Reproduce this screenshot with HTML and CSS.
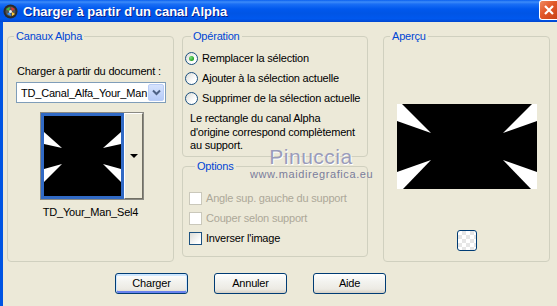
FILE: index.html
```html
<!DOCTYPE html>
<html lang="fr">
<head>
  <meta charset="UTF-8">
  <title>Charger à partir d'un canal Alpha</title>
  <link rel="stylesheet" href="styles.css">
</head>
<body>
  <div class="window">
    <div class="titlebar">
      <svg class="app-icon" width="15" height="15" viewBox="0 0 15 15">
        <circle cx="7.5" cy="7.5" r="7" fill="#2b2b2b"/>
        <circle cx="7.5" cy="7.5" r="5" fill="#555"/>
        <path d="M3 5 L7 3 L6 7 Z" fill="#3fbf3f"/>
        <path d="M8 3 L12 5 L9 7 Z" fill="#d33"/>
        <path d="M4 10 L7 8 L8 12 Z" fill="#39f"/>
        <path d="M9 8 L12 10 L9 12 Z" fill="#fc3"/>
        <circle cx="7.5" cy="7.5" r="1.5" fill="#eee"/>
      </svg>
      <span class="title">Charger à partir d'un canal Alpha</span>
      <div class="close-btn">
        <svg width="12" height="12" viewBox="0 0 12 12"><path d="M2 2 L10 10 M10 2 L2 10" stroke="#fff" stroke-width="2.2"/></svg>
      </div>
    </div>

    <div class="client">
      <div class="groups">
        <fieldset class="group group-alpha">
          <legend>Canaux Alpha</legend>
          <div class="doc-label">Charger à partir du document :</div>
          <div class="combo">
            <span class="combo-text">TD_Canal_Alfa_Your_Man</span>
            <span class="combo-btn">
              <svg width="9" height="7" viewBox="0 0 9 7"><path d="M1 1.5 L4.5 5 L8 1.5" fill="none" stroke="#4d6185" stroke-width="2"/></svg>
            </span>
          </div>
          <div class="thumb">
            <div class="thumb-img">
              <svg width="77" height="80" viewBox="0 0 77 80">
                <rect width="77" height="80" fill="#000"/>
                <path d="M0 16 L18 32 L0 28 Z" fill="#fff"/>
                <path d="M77 16 L59 32 L77 28 Z" fill="#fff"/>
                <path d="M0 53 L18 48 L0 66 Z" fill="#fff"/>
                <path d="M77 53 L59 48 L77 66 Z" fill="#fff"/>
              </svg>
            </div>
            <div class="thumb-btn"><span class="arrow"></span></div>
          </div>
          <div class="caption">TD_Your_Man_Sel4</div>
        </fieldset>

        <div class="middle">
          <fieldset class="group group-op">
            <legend>Opération</legend>
            <div class="choice"><span class="radio checked"></span>Remplacer la sélection</div>
            <div class="choice"><span class="radio"></span>Ajouter à la sélection actuelle</div>
            <div class="choice"><span class="radio"></span>Supprimer de la sélection actuelle</div>
            <p class="note">Le rectangle du canal Alpha<br>d'origine correspond complètement<br>au support.</p>
          </fieldset>

          <fieldset class="group group-opt">
            <legend>Options</legend>
            <div class="choice disabled"><span class="check"></span>Angle sup. gauche du support</div>
            <div class="choice disabled"><span class="check"></span>Couper selon support</div>
            <div class="choice"><span class="check"></span>Inverser l'image</div>
          </fieldset>
        </div>

        <fieldset class="group group-preview">
          <legend>Aperçu</legend>
          <div class="preview">
            <svg width="140" height="85" viewBox="0 0 140 85">
              <rect width="140" height="85" fill="#000"/>
              <path d="M0 0 L5 0 L34 29 L0 17 Z" fill="#fff"/>
              <path d="M140 0 L135 0 L106 29 L140 17 Z" fill="#fff"/>
              <path d="M0 85 L6 85 L34 56 L0 68 Z" fill="#fff"/>
              <path d="M140 85 L134 85 L106 56 L140 68 Z" fill="#fff"/>
            </svg>
          </div>
          <div class="bg-btn"></div>
        </fieldset>
      </div>

      <div class="actions">
        <div class="btn default">Charger</div>
        <div class="btn">Annuler</div>
        <div class="btn">Aide</div>
      </div>
    </div>

    <div class="watermark">
      <div class="wm-name">Pinuccia</div>
      <div class="wm-url">www.maidiregrafica.eu</div>
    </div>
  </div>
</body>
</html>
```

FILE: styles.css
```css
*{margin: 0; padding: 0; box-sizing: border-box;}
body{
  width: 557px;
  height: 306px;
  overflow: hidden;
  background: #ece9d8;
  font-family: "Liberation Sans", Arial, sans-serif;
  font-size: 11px;
  letter-spacing: -0.2px;
  color: #000;
}
.window{
  position: relative;
  width: 557px;
  height: 306px;
  display: flex;
  flex-direction: column;
  overflow: hidden;
}
.titlebar{
  height: 22px;
  display: flex;
  align-items: center;
  padding-left: 3px;
  background: linear-gradient(#0a5fef 0, #3d8cf9 2px, #1a6ff5 4px, #0058ee 9px, #0055e5 60%, #0058ee 85%, #0046d0 100%);
}
.app-icon{
  flex: none;
}
.title{
  margin-left: 5px;
  color: #fff;
  font-weight: bold;
  font-size: 13px;
  letter-spacing: 0;
  text-shadow: 1px 1px 0 #0a1f8a;
}
.close-btn{
  margin-left: auto;
  align-self: flex-start;
  width: 18px;
  height: 20px;
  border: 1px solid #fff;
  border-right: none;
  border-radius: 3px 0 0 3px;
  background: linear-gradient(135deg, #f08a62, #e2582a 45%, #c94117);
  display: flex;
  align-items: center;
  justify-content: center;
}
.client{
  flex: 1;
  border-left: 3px solid #0054e3;
  padding: 8px 0 0 4px;
}
.groups{
  display: flex;
  height: 232px;
}
.group{
  border: 1px solid #d0d0bf;
  border-radius: 4px;
  padding: 0;
}
.group legend{
  margin-left: 6px;
  padding: 0 2px;
  color: #0046d5;
  line-height: 13px;
}
.group-alpha{
  width: 167px;
}
.middle{
  width: 186px;
  margin-left: 8px;
  display: flex;
  flex-direction: column;
}
.group-preview{
  width: 167px;
  margin-left: 15px;
  display: flex;
  flex-direction: column;
  align-items: center;
}

/* canaux alpha */
.doc-label{
  margin: 22px 0 0 9px;
  line-height: 13px;
}
.combo{
  margin: 4px 0 0 8px;
  width: 150px;
  height: 21px;
  border: 1px solid #7f9db9;
  background: #fff;
  display: flex;
  align-items: center;
}
.combo-text{
  flex: 1;
  overflow: hidden;
  white-space: nowrap;
  padding-left: 4px;
}
.combo-btn{
  width: 16px;
  height: 17px;
  margin-right: 1px;
  border: 1px solid #b9cdf7;
  border-radius: 2px;
  background: linear-gradient(#d6e3fd, #b6cbf8);
  display: flex;
  align-items: center;
  justify-content: center;
}
.thumb{
  margin: 9px 0 0 32px;
  width: 104px;
  height: 88px;
  border: 1px solid #8a8a84;
  display: flex;
}
.thumb-img{
  border: 3px solid #316ac5;
  line-height: 0;
}
.thumb-btn{
  flex: 1;
  border-top: 1px solid #fff;
  border-left: 1px solid #fff;
  border-right: 1px solid #716f64;
  border-bottom: 1px solid #716f64;
  display: flex;
  align-items: center;
  justify-content: center;
}
.arrow{
  width: 0;
  height: 0;
  border-left: 4px solid transparent;
  border-right: 4px solid transparent;
  border-top: 4px solid #000;
}
.caption{
  margin-top: 6px;
  text-align: center;
  line-height: 13px;
}

/* operation / options */
.group-op{
  height: 127px;
  padding: 5px 0 0 2px;
}
.group-opt{
  margin-top: 3px;
  height: 97px;
  padding: 15px 0 0 6px;
}
.choice{
  height: 20px;
  display: flex;
  align-items: center;
  gap: 4px;
  white-space: nowrap;
}
.choice.disabled{
  color: #aca899;
}
.radio{
  width: 13px;
  height: 13px;
  border-radius: 50%;
  border: 1px solid #1c5180;
  background: linear-gradient(135deg, #dcdcd7, #fff 70%);
  display: flex;
  align-items: center;
  justify-content: center;
}
.radio.checked::after{
  content: "";
  width: 5px;
  height: 5px;
  border-radius: 50%;
  background: radial-gradient(circle at 35% 35%, #7be07b, #21a121 70%);
}
.check{
  width: 13px;
  height: 13px;
  border: 1px solid #1c5180;
  background: linear-gradient(135deg, #dcdcd7, #fff 80%);
}
.disabled .check{
  border-color: #cac8bb;
  background: #fff;
}
.note{
  margin: 4px 0 0 5px;
  line-height: 13.5px;
}

/* apercu */
.preview{
  margin-top: 61px;
  line-height: 0;
}
.bg-btn{
  margin-top: 41px;
  width: 20px;
  height: 21px;
  border: 1px solid #003c74;
  border-radius: 3px;
  background-color: #fff;
  background-image:
    linear-gradient(45deg, #e6e6e6 25%, transparent 25%, transparent 75%, #e6e6e6 75%),
    linear-gradient(45deg, #e6e6e6 25%, transparent 25%, transparent 75%, #e6e6e6 75%);
  background-size: 8px 8px;
  background-position: 0 0, 4px 4px;
}

/* buttons */
.actions{
  display: flex;
  gap: 26px;
  margin: 11px 0 0 108px;
}
.btn{
  width: 73px;
  height: 21px;
  border: 1px solid #003c74;
  border-radius: 3px;
  background: linear-gradient(#fff, #f3f3ef 40%, #eceae3 80%, #d6d0c5);
  text-align: center;
  line-height: 19px;
}
.btn.default{
  box-shadow: inset 0 1px 0 1px #cee7ff, inset 0 -1px 0 1px #6982ee;
}

/* filigrane */
.watermark{
  position: absolute;
  left: 250px;
  top: 146px;
  width: 122px;
  text-align: center;
  pointer-events: none;
  letter-spacing: 0;
}
.wm-name{
  font-size: 21px;
  line-height: 22px;
  color: #9a9cba;
  letter-spacing: 0.5px;
  text-shadow: 1px 1px 0 #fff;
}
.wm-url{
  font-size: 11px;
  line-height: 12px;
  color: #7a7d9c;
  letter-spacing: 0.6px;
}
```
